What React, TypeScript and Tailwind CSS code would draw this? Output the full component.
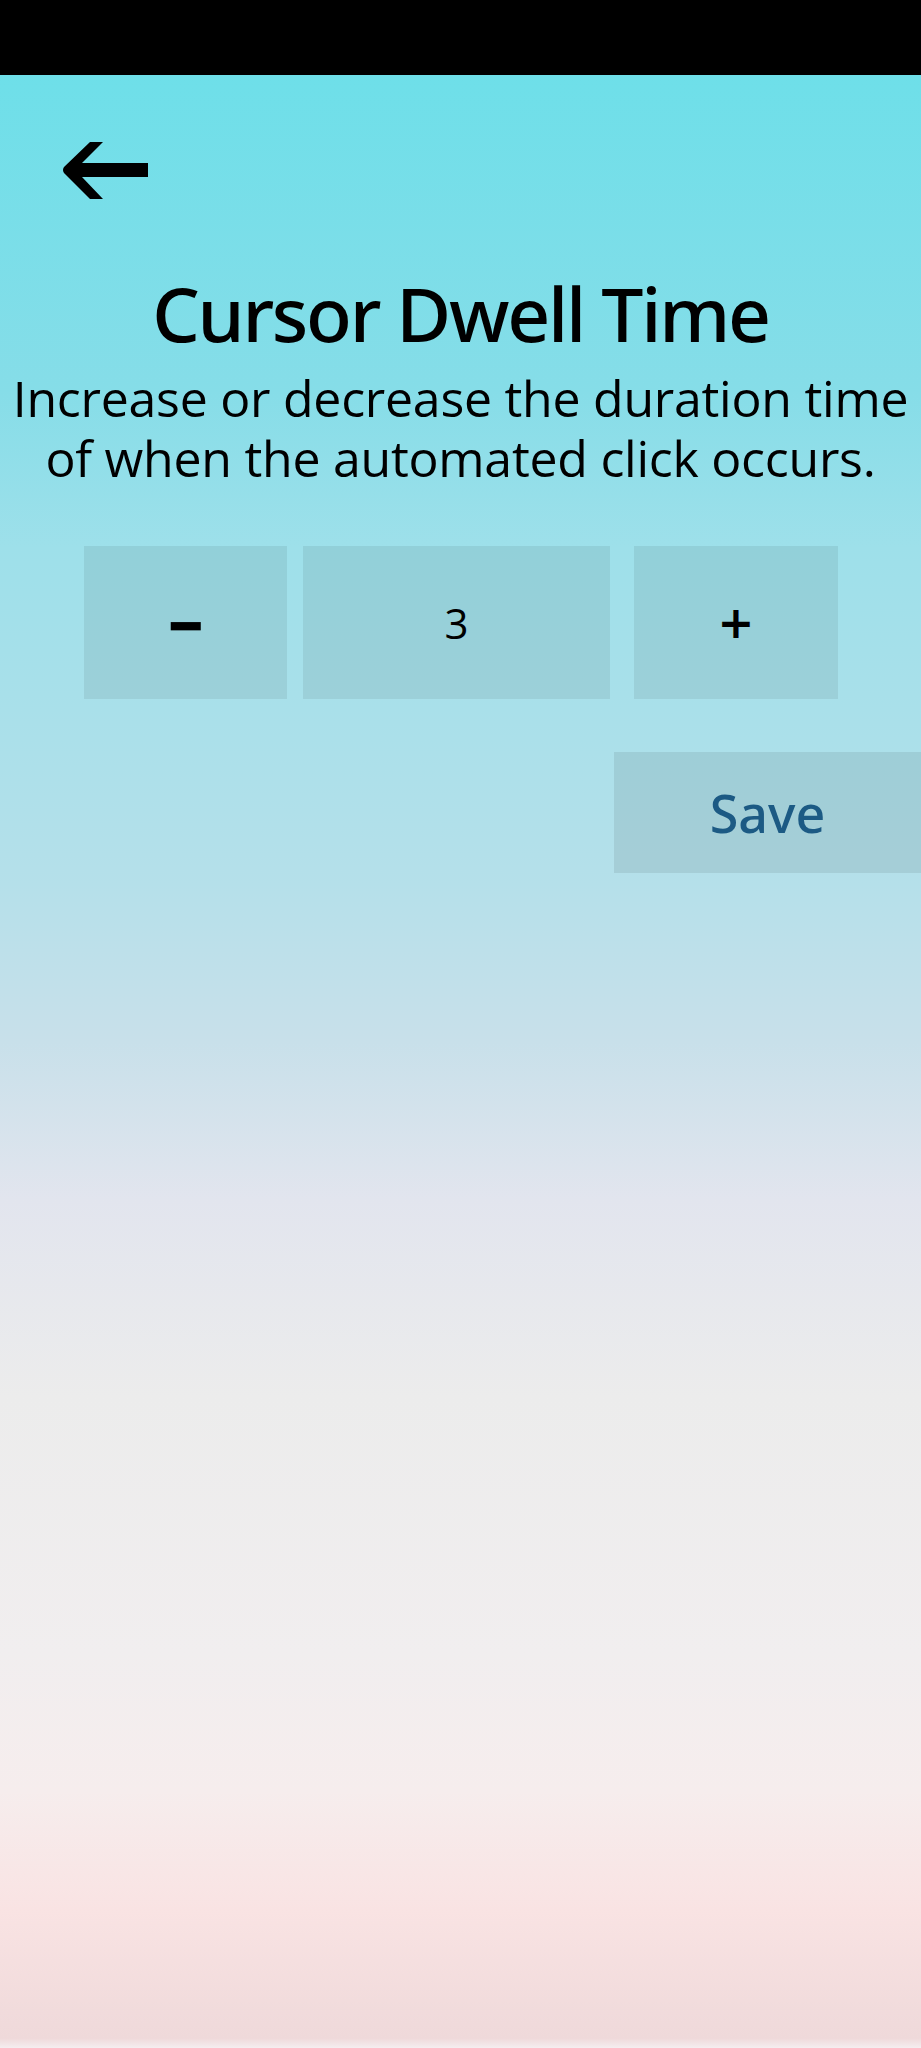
import { useState } from "react";

function BackArrow() {
  return (
    <svg width="90" height="62" viewBox="0 0 90 62" aria-hidden="true">
      <path d="M30 2h13L22 23h66v14H22l21 22H30L4 33q-2-3 0-6z" fill="#000" />
    </svg>
  );
}

export default function App() {
  const [value, setValue] = useState(3);

  return (
    <div className="flex h-[2048px] w-[921px] flex-col font-['Open_Sans',sans-serif] text-black">
      <div className="h-[75px] shrink-0 bg-black" />
      <main className="flex flex-1 flex-col bg-[linear-gradient(180deg,#6edfe9_0%,#86dde8_16%,#9ee0ea_24%,#b5e0ea_41%,#c8e0ea_49%,#e2e5ee_57%,#ececec_67%,#f1eeef_80%,#f6eded_87%,#f9e3e3_93%,#efd9da_99.5%,#f5eef0_100%)]">
        <button className="ml-[60px] mt-[65px] self-start" aria-label="Back">
          <BackArrow />
        </button>

        <h1 className="mt-[61px] text-center font-['Noto_Sans',sans-serif] text-[75px] leading-[100px] font-medium tracking-[-0.03em]">
          Cursor Dwell Time
        </h1>
        <p className="mt-[5px] text-center text-[50px] leading-[60px] tracking-[-0.005em]">
          <span className="block">Increase or decrease the duration time</span>
          <span className="block">of when the automated click occurs.</span>
        </p>

        <div className="mt-[58px] ml-[84px] flex h-[153px]">
          <button
            onClick={() => setValue((v) => Math.max(0, v - 1))}
            className="flex w-[203px] items-center justify-center bg-black/[0.07]"
          >
            <span className="inline-block scale-y-150 font-['DejaVu_Sans',sans-serif] text-[48px] font-bold leading-none">−</span>
          </button>
          <div className="ml-[16px] flex w-[307px] items-center justify-center bg-black/[0.07] text-[42px]">
            {value}
          </div>
          <button
            onClick={() => setValue((v) => v + 1)}
            className="ml-[24px] flex w-[204px] items-center justify-center bg-black/[0.07]"
          >
            <span className="font-['DejaVu_Sans',sans-serif] text-[44px] font-bold leading-none">+</span>
          </button>
        </div>

        <div className="mt-[53px] flex justify-end">
          <button className="flex h-[121px] w-[307px] items-center justify-center bg-black/[0.08] font-['Noto_Sans',sans-serif] text-[52px] font-medium text-[#1c5a84]">
            Save
          </button>
        </div>
      </main>
    </div>
  );
}
